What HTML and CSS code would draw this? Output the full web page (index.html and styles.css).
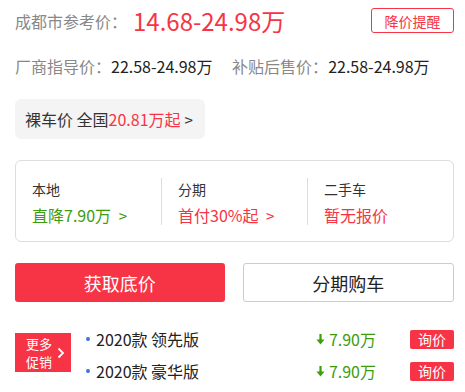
FILE: index.html
```html
<!DOCTYPE html>
<html lang="zh-CN">
<head>
    <meta charset="UTF-8">
    <meta name="viewport" content="width=device-width, initial-scale=1.0">
    <title>车型报价</title>
    <link rel="stylesheet" href="styles.css">
</head>
<body>
    <div class="price-panel">
        <div class="ref-row">
            <div class="ref-price">
                <span class="label">成都市参考价：</span><span class="big">14.68-24.98万</span>
            </div>
            <a class="remind-btn">降价提醒</a>
        </div>

        <div class="guide-row">
            <span class="label">厂商指导价：</span><span class="val">22.58-24.98万</span>
            <span class="label gap">补贴后售价：</span><span class="val">22.58-24.98万</span>
        </div>

        <div class="bare-price">裸车价 全国<span class="red">20.81万起</span> <span class="arrow">&gt;</span></div>

        <div class="deal-card">
            <div class="deal-item">
                <div class="deal-title">本地</div>
                <div class="deal-val green">直降7.90万 <span class="arrow">&gt;</span></div>
            </div>
            <div class="deal-item">
                <div class="deal-title">分期</div>
                <div class="deal-val red">首付30%起 <span class="arrow">&gt;</span></div>
            </div>
            <div class="deal-item">
                <div class="deal-title">二手车</div>
                <div class="deal-val red">暂无报价</div>
            </div>
        </div>

        <div class="action-row">
            <button class="btn btn-red">获取底价</button>
            <button class="btn btn-line">分期购车</button>
        </div>

        <div class="promo">
            <div class="promo-tag">
                <span class="promo-text">更多<br>促销</span>
                <svg width="8" height="12" viewBox="0 0 8 12"><path d="M1.5 1.5 L6 6 L1.5 10.5" fill="none" stroke="#fff" stroke-width="1.8"/></svg>
            </div>
            <ul class="promo-list">
                <li class="promo-item">
                    <span class="dot"></span>
                    <span class="model">2020款 领先版</span>
                    <span class="drop">
                        <svg width="9" height="11" viewBox="0 0 9 11"><path d="M4.5 0 V7" stroke="#3d9c0c" stroke-width="2.2"/><path d="M0.5 5.5 L4.5 10.5 L8.5 5.5 Z" fill="#3d9c0c"/></svg>
                        7.90万
                    </span>
                    <a class="ask-btn">询价</a>
                </li>
                <li class="promo-item">
                    <span class="dot"></span>
                    <span class="model">2020款 豪华版</span>
                    <span class="drop">
                        <svg width="9" height="11" viewBox="0 0 9 11"><path d="M4.5 0 V7" stroke="#3d9c0c" stroke-width="2.2"/><path d="M0.5 5.5 L4.5 10.5 L8.5 5.5 Z" fill="#3d9c0c"/></svg>
                        7.90万
                    </span>
                    <a class="ask-btn">询价</a>
                </li>
            </ul>
        </div>
    </div>
</body>
</html>
```

FILE: styles.css
```css
body {
    margin: 0;
    background: #fff;
    font-family: "Noto Sans CJK SC", "Noto Sans", sans-serif;
    color: #333;
}
.price-panel {
    padding: 8px 11px 0 15px;
}
.ref-row {
    display: flex;
    justify-content: space-between;
    align-items: center;
    height: 25px;
}
.ref-price {
    display: flex;
    align-items: center;
}
.label {
    color: #888;
    font-size: 16px;
}
.ref-price .label {
    margin-right: 6px;
}
.big {
    color: #f73445;
    font-size: 24px;
    line-height: 25px;
}
.remind-btn {
    display: flex;
    align-items: center;
    justify-content: center;
    box-sizing: border-box;
    width: 83px;
    height: 25px;
    border: 1px solid #f73445;
    border-radius: 3px;
    color: #f73445;
    font-size: 14px;
}
.guide-row {
    margin-top: 21px;
    font-size: 16px;
    line-height: 24px;
}
.val {
    color: #222;
}
.gap {
    margin-left: 16px;
}
.bare-price {
    display: inline-flex;
    align-items: center;
    margin-top: 21px;
    height: 40px;
    padding: 0 12px 0 10px;
    background: #f4f4f4;
    border-radius: 6px;
    font-size: 16px;
    color: #333;
}
.red {
    color: #f73445;
}
.green {
    color: #3d9c0c;
}
.arrow {
    margin-left: 4px;
    font-size: 15px;
}
.bare-price .arrow {
    color: #333;
}
.deal-card {
    display: flex;
    box-sizing: border-box;
    margin-top: 21px;
    height: 82px;
    padding: 17px 0 16px;
    border: 1px solid #ddd;
    border-radius: 6px;
}
.deal-item {
    flex: 1;
    padding-left: 16px;
    border-left: 1px solid #ddd;
}
.deal-item:first-child {
    border-left: none;
}
.deal-title {
    font-size: 14px;
    line-height: 22px;
    color: #333;
}
.deal-val {
    margin-top: 3px;
    font-size: 16px;
    line-height: 24px;
}
.action-row {
    display: flex;
    gap: 18px;
    margin-top: 21px;
}
.btn {
    flex: 1;
    height: 39px;
    border-radius: 3px;
    font-family: inherit;
    font-size: 18px;
}
.btn-red {
    background: #f73445;
    border: none;
    color: #fff;
}
.btn-line {
    background: #fff;
    border: 1px solid #ccc;
    color: #222;
}
.promo {
    display: flex;
    align-items: flex-start;
    margin-top: 21px;
}
.promo-tag {
    display: flex;
    align-items: center;
    gap: 5px;
    box-sizing: border-box;
    width: 56px;
    height: 39px;
    margin-top: 10px;
    padding-left: 11px;
    background: #f73445;
    color: #fff;
}
.promo-text {
    font-size: 13px;
    line-height: 18px;
}
.promo-list {
    flex: 1;
    list-style: none;
    margin: 0;
    padding: 0 0 0 15px;
}
.promo-item {
    display: flex;
    align-items: center;
    height: 32px;
    font-size: 16px;
    color: #222;
}
.dot {
    width: 4px;
    height: 4px;
    border-radius: 50%;
    background: #3a75d6;
    margin-right: 6px;
}
.model {
    flex: 1;
}
.drop {
    display: flex;
    align-items: center;
    gap: 4px;
    color: #3d9c0c;
}
.ask-btn {
    display: flex;
    align-items: center;
    justify-content: center;
    width: 44px;
    height: 19px;
    margin-left: 34px;
    border-radius: 2px;
    background: #f73445;
    color: #fff;
    font-size: 14px;
}
```
